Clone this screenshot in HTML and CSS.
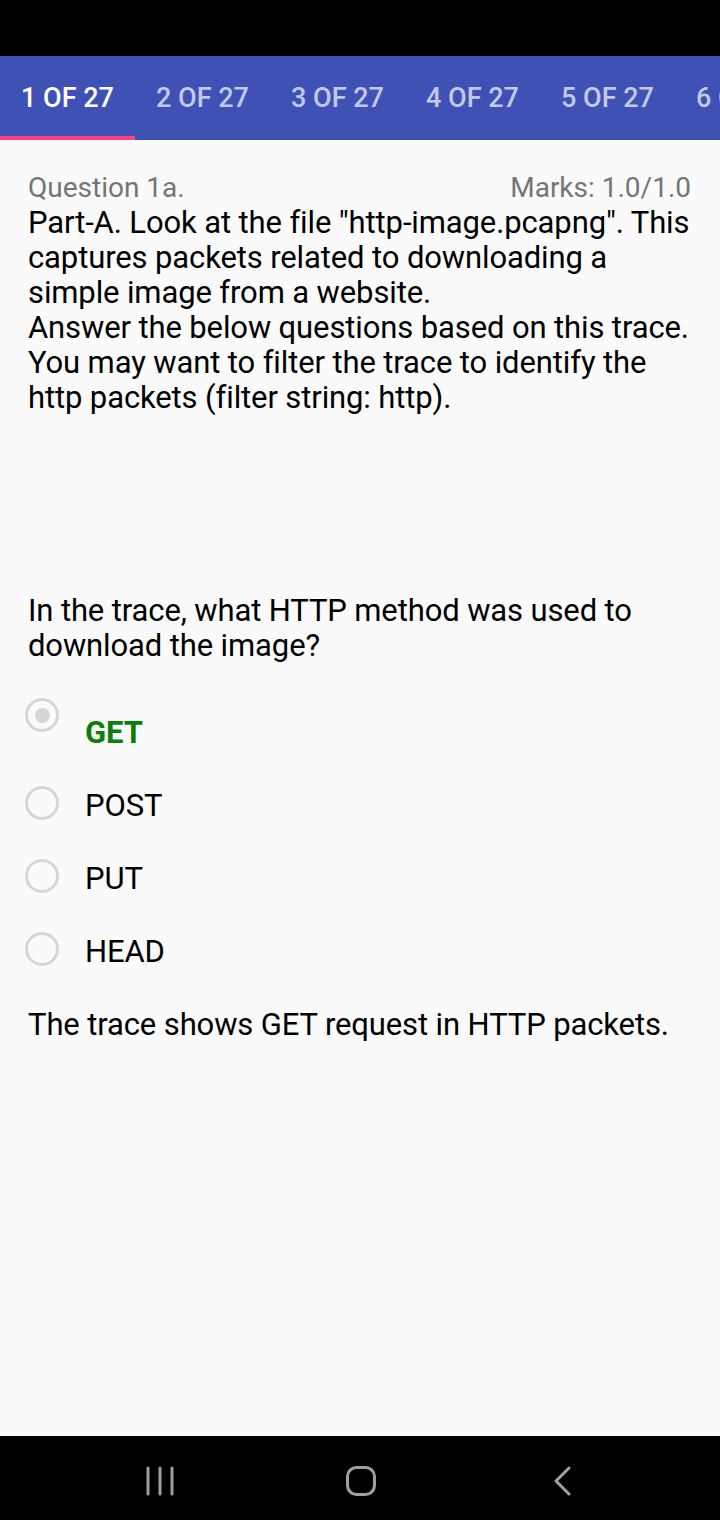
FILE: index.html
```html
<!DOCTYPE html>
<html>
<head>
<meta charset="utf-8">
<link rel="stylesheet" href="styles.css">
</head>
<body>
<div class="status"></div>
<nav class="tabs">
  <div class="tab active">1 OF 27</div>
  <div class="tab">2 OF 27</div>
  <div class="tab">3 OF 27</div>
  <div class="tab">4 OF 27</div>
  <div class="tab">5 OF 27</div>
  <div class="tab">6 OF 27</div>
</nav>
<main class="content">
  <div class="head">
    <span>Question 1a.</span>
    <span>Marks: 1.0/1.0</span>
  </div>
  <p class="text">Part-A. Look at the file "http-image.pcapng". This captures packets related to downloading a simple image from a website.<br>Answer the below questions based on this trace. You may want to filter the trace to identify the http packets (filter string: http).</p>
  <p class="text question">In the trace, what HTTP method was used to download the image?</p>
  <ul class="options">
    <li class="opt correct"><span class="radio checked"></span><span class="label">GET</span></li>
    <li class="opt"><span class="radio"></span><span class="label">POST</span></li>
    <li class="opt"><span class="radio"></span><span class="label">PUT</span></li>
    <li class="opt"><span class="radio"></span><span class="label">HEAD</span></li>
  </ul>
  <p class="text feedback">The trace shows GET request in HTTP packets.</p>
</main>
<footer class="navbar">
  <svg class="nav-recent" width="28" height="30" viewBox="0 0 28 30"><g stroke="#a0a0a0" stroke-width="3" stroke-linecap="round"><line x1="2" y1="2" x2="2" y2="28"/><line x1="14" y1="2" x2="14" y2="28"/><line x1="26" y1="2" x2="26" y2="28"/></g></svg>
  <svg class="nav-home" width="32" height="32" viewBox="0 0 32 32"><rect x="2.5" y="2.5" width="27" height="27" rx="9" fill="none" stroke="#a0a0a0" stroke-width="3"/></svg>
  <svg class="nav-back" width="18" height="30" viewBox="0 0 18 30"><polyline points="15,2 2,15 15,28" fill="none" stroke="#a0a0a0" stroke-width="3" stroke-linecap="round" stroke-linejoin="round"/></svg>
</footer>
</body>
</html>
```
FILE: styles.css
```css
* { box-sizing: border-box; }
html, body { margin: 0; padding: 0; }
body {
  width: 720px;
  height: 1520px;
  background: #fafafa;
  font-family: Roboto, "Liberation Sans", sans-serif;
  display: flex;
  flex-direction: column;
  overflow: hidden;
}
.status { height: 56px; background: #000; flex: none; }
.tabs {
  height: 84px;
  background: #3f51b5;
  display: flex;
  flex: none;
  overflow: hidden;
}
.tab {
  flex: none;
  width: 135px;
  display: flex;
  align-items: center;
  justify-content: center;
  font-size: 27px;
  font-weight: 500;
  color: rgba(255,255,255,0.7);
  border-bottom: 4px solid transparent;
  padding-top: 4px;
  white-space: nowrap;
}
.tab.active { color: #fff; border-bottom-color: #ff4081; }
.content {
  flex: 1;
  padding: 32px 26px 0 28px;
}
.head {
  display: flex;
  justify-content: space-between;
  font-size: 28px;
  color: #757575;
  line-height: 30px;
  padding-top: 1px;
}
.head span:last-child { margin-right: 3px; }
.text {
  margin: 0;
  font-size: 31px;
  line-height: 35px;
  letter-spacing: -0.12px;
  color: #000;
}
.head + .text { margin-top: 2px; }
.question { margin-top: 178px; }
.options { list-style: none; margin: 28px 0 0 0; padding: 0; }
.opt {
  display: flex;
  align-items: center;
  height: 73px;
  margin-left: -3px;
}
.radio {
  flex: none;
  width: 34px;
  height: 34px;
  border: 3px solid #d6d6d6;
  border-radius: 50%;
  display: flex;
  align-items: center;
  justify-content: center;
}
.radio.checked::after {
  content: "";
  width: 15px;
  height: 15px;
  border-radius: 50%;
  background: #d6d6d6;
}
.label {
  margin-left: 26px;
  margin-top: 6px;
  font-size: 31px;
  letter-spacing: -0.12px;
  color: #000;
}
.opt.correct { align-items: flex-start; padding-top: 7px; height: 75px; }
.opt.correct .label { color: #0a800a; font-weight: 700; margin-top: 16px; }
.feedback { margin-top: 22px; }
.navbar {
  height: 84px;
  background: #000;
  flex: none;
  display: flex;
  align-items: center;
  padding: 5px 0 0 146px;
}
.nav-home { margin-left: 171px; }
.nav-back { margin-left: 177px; }
```
